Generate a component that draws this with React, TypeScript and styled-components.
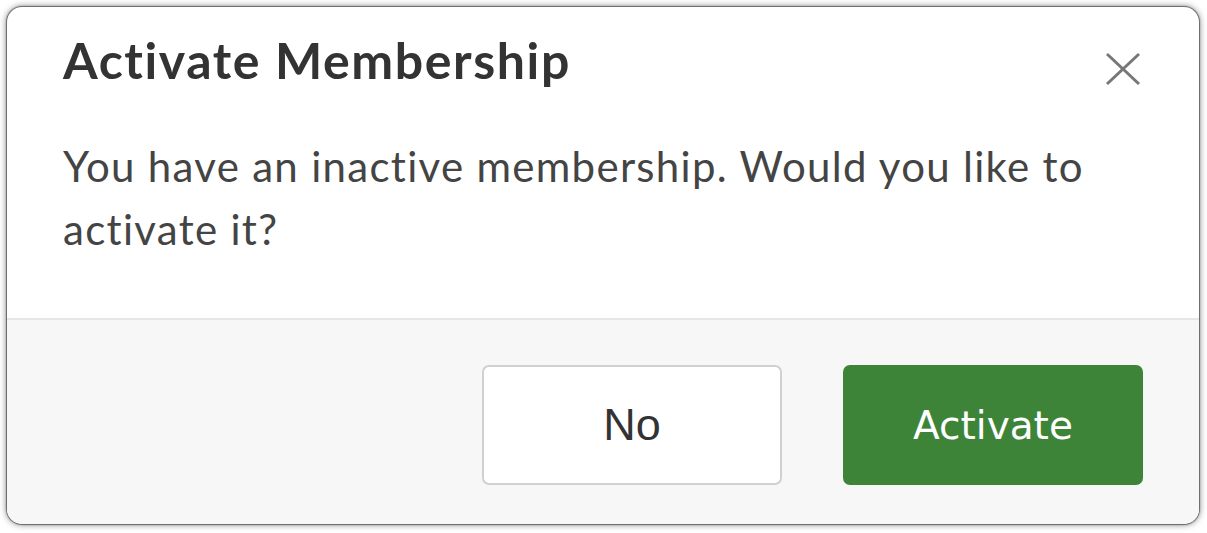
import React from "react";
import styled, { createGlobalStyle } from "styled-components";

const GlobalStyle = createGlobalStyle`
    html, body {
        margin: 0;
        padding: 0;
        background: #ffffff;
    }
    * {
        box-sizing: border-box;
    }
`;

const Page = styled.div`
    width: 1207px;
    height: 533px;
    padding: 7px 8px 9px 7px;
    background: #ffffff;
`;

const Dialog = styled.div`
    display: flex;
    flex-direction: column;
    height: 100%;
    background: #ffffff;
    border-radius: 15px;
    overflow: hidden;
    box-shadow: 0 0 1px 1px rgba(0, 0, 0, 0.45), 0 0 7px rgba(0, 0, 0, 0.6);
`;

const Header = styled.div`
    display: flex;
    justify-content: space-between;
    align-items: flex-start;
    padding: 23px 58px 0 56px;
`;

const Title = styled.h2`
    margin: 0;
    font-family: Lato, "Liberation Sans", sans-serif;
    font-size: 50px;
    font-weight: 700;
    line-height: 60px;
    letter-spacing: 1.6px;
    color: #333333;
`;

const CloseButton = styled.button`
    display: flex;
    align-items: center;
    justify-content: center;
    margin-top: 22px;
    padding: 0;
    border: none;
    background: transparent;
    cursor: pointer;
`;

const Body = styled.p`
    flex: 1;
    margin: 0;
    padding: 45px 90px 0 56px;
    font-family: Lato, "Liberation Sans", sans-serif;
    font-size: 42px;
    line-height: 63px;
    letter-spacing: 1.3px;
    color: #444444;
`;

const Footer = styled.div`
    display: flex;
    justify-content: flex-end;
    gap: 61px;
    padding: 45px 56px 39px;
    background: #f7f7f7;
    border-top: 2px solid #e6e6e6;
`;

const Button = styled.button<{ $primary?: boolean }>`
    width: 300px;
    height: 120px;
    border-radius: 7px;
    font-size: ${(p) => (p.$primary ? "39px" : "45px")};
    font-family: ${(p) =>
        p.$primary
            ? '"DejaVu Sans", Verdana, sans-serif'
            : '"Liberation Sans", Arial, sans-serif'};
    color: ${(p) => (p.$primary ? "#ffffff" : "#333333")};
    background: ${(p) => (p.$primary ? "#3d8439" : "#ffffff")};
    border: ${(p) => (p.$primary ? "none" : "2px solid #d0d0d0")};
    cursor: pointer;
`;

const CloseIcon = () => (
    <svg width="36" height="34" viewBox="0 0 36 34">
        <line x1="2" y1="2" x2="34" y2="32" stroke="#777" strokeWidth="3" />
        <line x1="34" y1="2" x2="2" y2="32" stroke="#777" strokeWidth="3" />
    </svg>
);

const App = () => {
    return (
        <>
            <GlobalStyle />
            <Page>
                <Dialog>
                    <Header>
                        <Title>Activate Membership</Title>
                        <CloseButton aria-label="Close">
                            <CloseIcon />
                        </CloseButton>
                    </Header>
                    <Body>
                        You have an inactive membership. Would you like to
                        activate it?
                    </Body>
                    <Footer>
                        <Button>No</Button>
                        <Button $primary>Activate</Button>
                    </Footer>
                </Dialog>
            </Page>
        </>
    );
};

export default App;
